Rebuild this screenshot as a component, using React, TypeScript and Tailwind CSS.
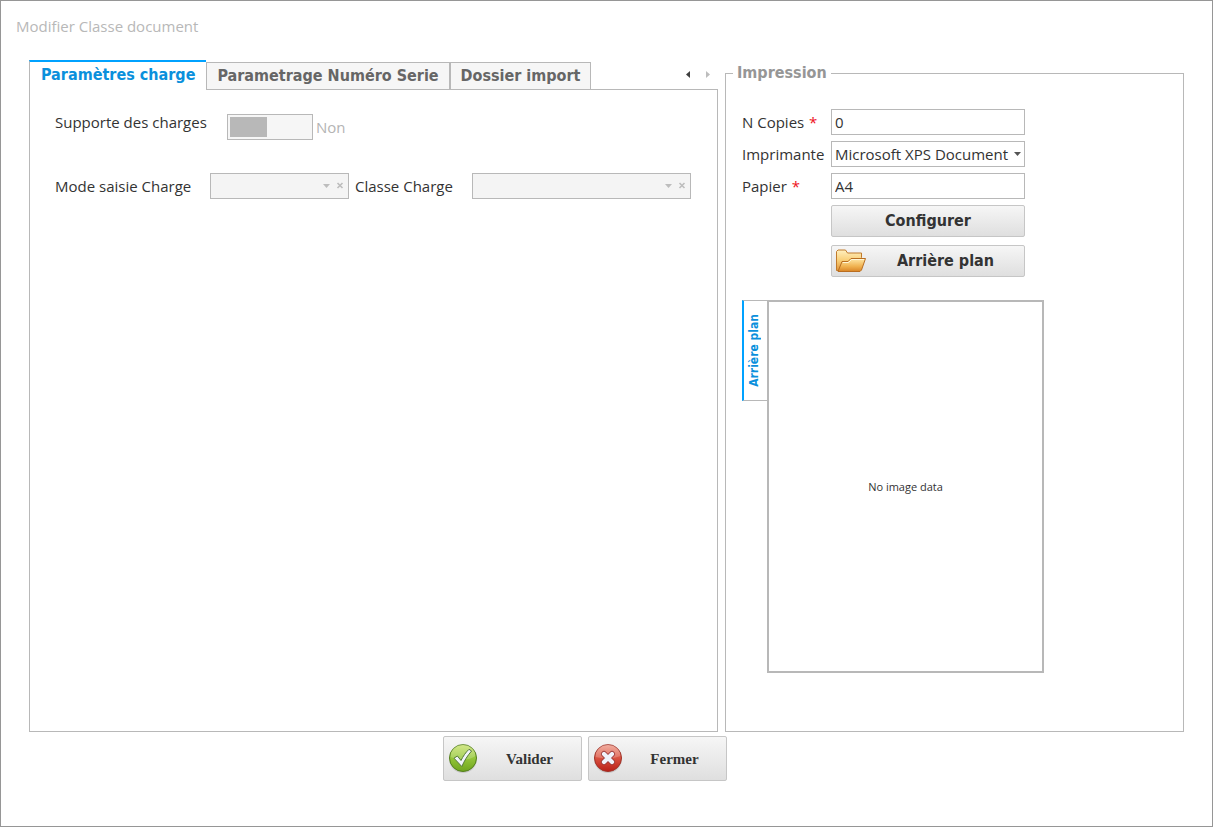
import React, { useState } from 'react';

const tabs = ['Paramètres charge', 'Parametrage Numéro Serie', 'Dossier import'];

function ValidIcon() {
  return (
    <svg className="h-8 w-8 shrink-0" viewBox="0 0 32 32" aria-hidden="true">
      <defs>
        <linearGradient id="valid-fill" x1="0" y1="0" x2="0" y2="1">
          <stop offset="0" stopColor="#c9e26a" />
          <stop offset="0.45" stopColor="#98c93c" />
          <stop offset="1" stopColor="#6fa51f" />
        </linearGradient>
      </defs>
      <circle cx="16" cy="16" r="14" fill="#000000" opacity="0.12" />
      <circle cx="16" cy="15" r="13.5" fill="url(#valid-fill)" stroke="#54801c" />
      <path d="M3.5 14a12.5 12.5 0 0 1 25-1c-7 5-17 4-25 1z" fill="#ffffff" opacity="0.2" />
      <path
        d="M7 15.200l3.400-2.200 3.600 4.500C16 13.500 18.500 9.500 22 6.300l2.600 1.700C20.500 12.500 17.500 17.500 14.800 23.500z"
        fill="#f2f5fb"
        stroke="#55793a"
        strokeLinejoin="round"
      />
    </svg>
  );
}

function CloseIcon() {
  return (
    <svg className="h-8 w-8 shrink-0" viewBox="0 0 32 32" aria-hidden="true">
      <defs>
        <linearGradient id="close-fill" x1="0" y1="0" x2="0" y2="1">
          <stop offset="0" stopColor="#ee9a88" />
          <stop offset="0.45" stopColor="#dc5745" />
          <stop offset="1" stopColor="#b91f18" />
        </linearGradient>
      </defs>
      <circle cx="16" cy="16" r="14" fill="#000000" opacity="0.12" />
      <circle cx="16" cy="15" r="13.5" fill="url(#close-fill)" stroke="#a03329" />
      <path d="M3.5 14a12.5 12.5 0 0 1 25-1c-7 3-17 3-25 1z" fill="#ffffff" opacity="0.2" />
      <path d="M12 11l8 8M20 11l-8 8" stroke="#9c3a3a" strokeWidth="6" strokeLinecap="round" />
      <path d="M12 11l8 8M20 11l-8 8" stroke="#f0f3fb" strokeWidth="4.2" strokeLinecap="round" />
    </svg>
  );
}

function FolderIcon() {
  return (
    <svg className="h-8 w-8 shrink-0" viewBox="0 0 32 32" aria-hidden="true">
      <defs>
        <linearGradient id="folder-back" x1="0" y1="0" x2="0" y2="1">
          <stop offset="0" stopColor="#fff0c0" />
          <stop offset="0.5" stopColor="#f9cf78" />
          <stop offset="1" stopColor="#e0953a" />
        </linearGradient>
        <linearGradient id="folder-front" x1="0" y1="0" x2="0" y2="1">
          <stop offset="0" stopColor="#ffe9a8" />
          <stop offset="0.6" stopColor="#f0b250" />
          <stop offset="1" stopColor="#d98526" />
        </linearGradient>
      </defs>
      <path
        d="M1.500 25.500V6.500L3 5h7.500L12.500 8H26.500V12.500L24 25.500z"
        fill="url(#folder-back)"
        stroke="#c07a2c"
        strokeLinejoin="round"
      />
      <path
        d="M3 26.500L7 16.500h6l3-3H30.500L26.500 25l-1.500 1.500z"
        fill="url(#folder-front)"
        stroke="#b96d20"
        strokeLinejoin="round"
      />
      <path d="M7.800 17.500h5.700l3-3h12.500" fill="none" stroke="#fff6d6" />
    </svg>
  );
}

function DisabledCombo({ id, className }: { id: string; className: string }) {
  return (
    <div className={`relative h-[26px] ${className}`}>
      <select id={id} disabled className="h-full w-full appearance-none border border-[#b8b8b8] bg-[#f4f4f4]">
        <option></option>
      </select>
      <svg
        className="pointer-events-none absolute top-2 right-[3px] h-2 w-6"
        viewBox="0 0 24 8"
        fill="none"
        aria-hidden="true"
      >
        <path d="M1 3h7l-3.500 4z" fill="#bdbdbd" />
        <path d="M15.500 2l5 5M20.500 2l-5 5" stroke="#bdbdbd" strokeWidth="1.600" />
      </svg>
    </div>
  );
}

function ChargePanel() {
  return (
    <div className="flex-1 border border-t-0 border-[#b8b8b8] pt-6 pr-[26px] pl-[25px]">
      <div className="flex items-start">
        <label htmlFor="supporte" className="w-[172px] leading-4">
          Supporte des charges
        </label>
        <input
          id="supporte"
          type="checkbox"
          role="switch"
          disabled
          className="h-[26px] w-[86px] appearance-none border border-[#b8b8b8] bg-[#f6f6f6] p-[2px] before:block before:h-5 before:w-[37px] before:bg-[#b8b8b8] checked:before:ml-auto"
        />
        <span className="ml-[3px] leading-[26px] text-[#b4b4b4]">Non</span>
      </div>
      <div className="mt-[33px] flex items-center">
        <label htmlFor="mode" className="w-[155px] shrink-0">
          Mode saisie Charge
        </label>
        <DisabledCombo id="mode" className="w-[139px] shrink-0" />
        <label htmlFor="classe" className="ml-[6px] w-[117px] shrink-0">
          Classe Charge
        </label>
        <DisabledCombo id="classe" className="min-w-0 flex-1" />
      </div>
    </div>
  );
}

function TabSection() {
  const [active, setActive] = useState(0);

  return (
    <section className="flex min-w-0 flex-col">
      <div className="flex h-[30px] items-end">
        <div
          role="tablist"
          className='flex h-full items-end font-["DejaVu_Sans_Condensed","DejaVu_Sans",sans-serif] text-base font-bold'
        >
          {tabs.map((tab, i) => (
            <button
              key={tab}
              role="tab"
              aria-selected={active === i}
              onClick={() => setActive(i)}
              className={
                active === i
                  ? 'h-[30px] border-t-2 border-l border-t-[#00a2ff] border-l-[#b8b8b8] px-[11px] pb-[2px] whitespace-nowrap text-[#0a90dc]'
                  : 'h-7 border border-[#b8b8b8] bg-[#f6f6f6] px-[10px] whitespace-nowrap text-[#666666]'
              }
            >
              {tab}
            </button>
          ))}
        </div>
        <div className="flex h-full flex-1 items-center justify-end border-b border-[#b8b8b8]">
          <button aria-label="Onglet précédent" className="h-4 w-5">
            <svg className="mx-auto block h-2 w-2" viewBox="0 0 8 8">
              <path d="M6 0v7L2 3.500z" fill="#404040" />
            </svg>
          </button>
          <button aria-label="Onglet suivant" disabled className="h-4 w-5">
            <svg className="mx-auto block h-2 w-2" viewBox="0 0 8 8">
              <path d="M2 0v7l4-3.500z" fill="#bdbdbd" />
            </svg>
          </button>
        </div>
      </div>
      <ChargePanel />
    </section>
  );
}

function Impression() {
  const field = 'h-[26px] w-full border border-[#b8b8b8] bg-white px-[3px]';
  const button =
    'flex h-8 w-full items-center justify-center rounded-xs border border-[#c6c6c6] bg-gradient-to-b from-[#f6f6f6] to-[#dfdfdf] font-["DejaVu_Sans_Condensed","DejaVu_Sans",sans-serif] text-base font-bold';

  return (
    <fieldset className="min-w-0 border border-[#b8b8b8] px-[7px]">
      <legend className='px-1 font-["DejaVu_Sans_Condensed","DejaVu_Sans",sans-serif] text-base leading-[26px] font-bold text-[#969696]'>
        Impression
      </legend>
      <div className="px-[9px] pt-[23px]">
        <div className="grid w-[283px] grid-cols-[89px_1fr] items-center gap-y-[6px]">
          <label htmlFor="copies">
            N Copies <span className="ml-px text-[#ee1122]">*</span>
          </label>
          <input id="copies" type="text" defaultValue="0" className={field} />
          <label htmlFor="imprimante">Imprimante</label>
          <div className="relative">
            <select id="imprimante" className={`${field} block appearance-none pr-3 whitespace-nowrap`}>
              <option>Microsoft XPS Document</option>
            </select>
            <svg className="pointer-events-none absolute top-[11px] right-1 h-1 w-[7px]" viewBox="0 0 7 4">
              <path d="M0 0h7L3.500 4z" fill="#555555" />
            </svg>
          </div>
          <label htmlFor="papier">
            Papier <span className="ml-px text-[#ee1122]">*</span>
          </label>
          <input id="papier" type="text" defaultValue="A4" className={field} />
          <div className="col-start-2 flex flex-col gap-2">
            <button className={button}>Configurer</button>
            <button className={`${button} pl-[3px]`}>
              <FolderIcon />
              <span className="flex-1">Arrière plan</span>
            </button>
          </div>
        </div>
        <div className="mt-[23px] flex items-start">
          <div role="tablist" aria-orientation="vertical" className="z-10">
            <button
              role="tab"
              aria-selected="true"
              className='flex h-[101px] w-[26px] items-center border-y border-l-2 border-y-[#b8b8b8] border-l-[#00a2ff] font-["DejaVu_Sans_Condensed","DejaVu_Sans",sans-serif] text-xs leading-5 font-bold text-[#0a90dc]'
            >
              <span className="rotate-180 whitespace-nowrap [writing-mode:vertical-rl]">Arrière plan</span>
            </button>
          </div>
          <div className="-ml-px flex h-[373px] w-[277px] items-center justify-center border-2 border-[#b8b8b8] text-[11px]">
            No image data
          </div>
        </div>
      </div>
    </fieldset>
  );
}

export default function App() {
  const action =
    'flex h-[45px] w-[139px] items-center rounded-xs border border-[#c6c6c6] bg-gradient-to-b from-[#f6f6f6] to-[#dfdfdf] pl-[3px] font-["Liberation_Serif",serif] text-[15px] font-bold';

  return (
    <main className='flex min-h-screen flex-col border border-[#969696] bg-white px-7 pt-[13px] pb-[45px] font-["Open_Sans",sans-serif] text-[15px] leading-6 text-[#333333]'>
      <h1 className="-ml-[13px] text-[#b8b8b8]">Modifier Classe document</h1>
      <div className="mt-[22px] grid flex-1 grid-cols-[689fr_459fr] gap-[7px]">
        <TabSection />
        <Impression />
      </div>
      <div className="mt-1 flex justify-center gap-[6px] pr-11">
        <button className={action}>
          <ValidIcon />
          <span className="flex-1">Valider</span>
        </button>
        <button className={action}>
          <CloseIcon />
          <span className="flex-1">Fermer</span>
        </button>
      </div>
    </main>
  );
}
